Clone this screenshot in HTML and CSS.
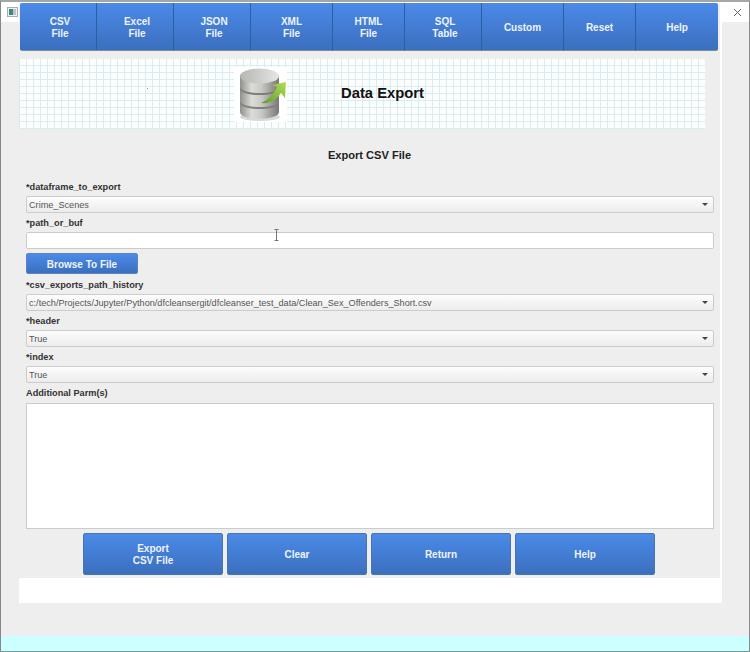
FILE: index.html
```html
<!DOCTYPE html>
<html>
<head>
  <meta charset="utf-8">
  <title>Data Export</title>
  <link rel="stylesheet" href="styles.css">
</head>
<body>

<div class="window">
  <div class="columns">
    <!-- left gutter with app icon -->
    <div class="gutter">
      <div class="titlebox">
        <svg class="app-icon" width="11" height="10" viewBox="0 0 11 10">
          <rect x="0.5" y="0.5" width="10" height="9" fill="#eef1f1" stroke="#a9afb0"/>
          <rect x="2" y="2" width="4" height="6" fill="#3f8a74"/>
          <rect x="6" y="2" width="3" height="6" fill="#b9c7d6"/>
        </svg>
      </div>
    </div>

    <div class="panel">
      <div class="panel-body">
        <!-- top toolbar -->
        <div class="toolbar">
          <button class="tool w77">CSV<br>File</button>
          <button class="tool w77">Excel<br>File</button>
          <button class="tool w77">JSON<br>File</button>
          <button class="tool w82">XML<br>File</button>
          <button class="tool w72">HTML<br>File</button>
          <button class="tool w77">SQL<br>Table</button>
          <button class="tool w82">Custom</button>
          <button class="tool w72">Reset</button>
          <button class="tool w82">Help</button>
        </div>

        <!-- banner -->
        <div class="banner">
          <i class="speck"></i>
          <div class="banner-icon">
            <svg width="53" height="55" viewBox="0 0 53 55">
              <defs>
                <linearGradient id="metal" x1="0" x2="1" y1="0" y2="0">
                  <stop offset="0" stop-color="#8f8f8c"/>
                  <stop offset="0.3" stop-color="#dcdcd9"/>
                  <stop offset="0.55" stop-color="#c9c9c6"/>
                  <stop offset="1" stop-color="#777774"/>
                </linearGradient>
                <linearGradient id="lid" x1="0" x2="1" y1="0" y2="0">
                  <stop offset="0" stop-color="#b5b5b2"/>
                  <stop offset="1" stop-color="#e6e6e4"/>
                </linearGradient>
                <linearGradient id="arrow" x1="0" x2="1" y1="1" y2="0">
                  <stop offset="0" stop-color="#5d9e1f"/>
                  <stop offset="1" stop-color="#b4dc5c"/>
                </linearGradient>
              </defs>
              <ellipse cx="26" cy="50" rx="20" ry="4" fill="#d8d8d8"/>
              <path d="M6 8 V45 C6 54 45 54 45 45 V8 Z" fill="url(#metal)"/>
              <path d="M6 20 C6 28 45 28 45 20 V22 C45 30 6 30 6 22 Z" fill="#7d7d7a"/>
              <path d="M6 34 C6 42 45 42 45 34 V36 C45 44 6 44 6 36 Z" fill="#808080"/>
              <ellipse cx="25.5" cy="9" rx="19.5" ry="7.5" fill="url(#lid)"/>
              <path d="M27 36 C34 33 40 27 43 20 L38 18 L52 15 L51 31 L47 26 C43 32 36 37 27 36 Z" fill="url(#arrow)"/>
            </svg>
          </div>
          <div class="banner-title">Data Export</div>
        </div>

        <div class="form-title">Export CSV File</div>

        <form class="form">
          <label class="lbl">*dataframe_to_export</label>
          <div class="select">Crime_Scenes</div>

          <label class="lbl">*path_or_buf</label>
          <div class="text-input">
            <svg class="ibeam" width="5" height="12" viewBox="0 0 5 12">
              <path d="M0.5 0.5 H4.5 M2.5 0.5 V11.5 M0.5 11.5 H4.5" fill="none" stroke="#777"/>
            </svg>
          </div>
          <button type="button" class="browse">Browse To File</button>

          <label class="lbl lbl-browse">*csv_exports_path_history</label>
          <div class="select">c:/tech/Projects/Jupyter/Python/dfcleansergit/dfcleanser_test_data/Clean_Sex_Offenders_Short.csv</div>

          <label class="lbl">*header</label>
          <div class="select">True</div>

          <label class="lbl">*index</label>
          <div class="select">True</div>

          <label class="lbl lbl-extra">Additional Parm(s)</label>
          <div class="textarea"></div>
        </form>

        <div class="actions">
          <button class="action">Export<br>CSV File</button>
          <button class="action">Clear</button>
          <button class="action">Return</button>
          <button class="action">Help</button>
        </div>
      </div>
    </div>

    <!-- right gutter with close button -->
    <div class="gutter">
      <div class="titlebox titlebox-right">
        <svg width="9" height="9" viewBox="0 0 9 9">
          <path d="M1 1 L8 8 M8 1 L1 8" stroke="#666" fill="none"/>
        </svg>
      </div>
    </div>
  </div>

  <div class="statusbar"></div>
</div>

</body>
</html>
```

FILE: styles.css
```css
/* page */
body {
  margin: 0;
  font-family: "Liberation Sans", Arial, sans-serif;
}

button {
  font-family: inherit;
  cursor: pointer;
}

.window {
  width: 750px;
  height: 652px;
  box-sizing: border-box;
  display: flex;
  flex-direction: column;
  background: #eeeeee;
  border-top: 2px solid #a6a6a6;
  border-left: 1px solid #888;
  border-right: 1px solid #888;
  border-bottom: 1px solid #7d9a9a;
}

.columns {
  flex: 1;
  display: grid;
  grid-template-columns: 18px 703px 27px;
}

.statusbar {
  height: 15px;
  background: #ccffff;
}

/* gutters */
.titlebox {
  height: 20px;
  background: #fff;
  display: flex;
  align-items: center;
  padding-left: 6px;
}

.titlebox-right {
  padding-left: 11px;
}

/* middle panel: grey body, white strip along the right and bottom */
.panel {
  height: 601px;
  background: #fff;
  padding: 1px 2px 0 0;
  box-sizing: border-box;
}

.panel-body {
  background: #eee;
}

.toolbar {
  display: flex;
  margin-left: 1px;
  width: 698px;
  height: 48px;
}

.tool {
  height: 48px;
  padding: 2px 0 0;
  color: #eef3fb;
  font-size: 10px;
  line-height: 12px;
  font-weight: bold;
  background: linear-gradient(#4b8ae8, #3b6fbe);
  border: 0;
  border-right: 1px solid #2d5da3;
  border-bottom: 1px solid #7a8ba3;
}

.w72 { width: 72px; }
.w77 { width: 77px; padding-left: 4px; }
.w82 { width: 82px; }

.tool:first-child {
  border-radius: 2px 0 0 2px;
}

.tool:last-child {
  border-right: 0;
  border-radius: 0 2px 2px 0;
}

/* banner with the graph paper background */
.banner {
  display: flex;
  align-items: center;
  position: relative;
  width: 686px;
  height: 70px;
  margin-top: 8px;
  background-color: #fcfefe;
  background-image:
    repeating-linear-gradient(90deg, #d9edf0 0 1px, transparent 1px 7px),
    repeating-linear-gradient(0deg, #d9edf0 0 1px, transparent 1px 7px);
}

.speck {
  position: absolute;
  left: 128px;
  top: 29px;
  width: 1px;
  height: 1px;
  background: #8a9a9a;
}

.banner-icon {
  margin: 0 0 0 215px;
  width: 53px;
  height: 55px;
  background: #fff;
}

.banner-title {
  margin: 0 0 3px 54px;
  font-size: 14.8px;
  font-weight: bold;
  color: #111;
}

.form-title {
  height: 48px;
  padding-top: 20px;
  box-sizing: border-box;
  text-align: center;
  font-size: 11.1px;
  line-height: 13px;
  font-weight: bold;
  color: #222;
}

.form {
  padding: 0 6px 0 7px;
  display: flex;
  flex-direction: column;
}

.lbl {
  display: block;
  height: 19px;
  line-height: 14px;
  padding-top: 3px;
  box-sizing: border-box;
  font-size: 9.2px;
  font-weight: bold;
  color: #333;
}

.lbl-browse {
  margin-top: 1px;
}

.lbl-extra {
  height: 20px;
}

.select {
  height: 17px;
  box-sizing: border-box;
  line-height: 16px;
  padding-left: 2px;
  font-size: 9.14px;
  color: #555;
  border: 1px solid #ccc;
  border-radius: 2px;
  background: linear-gradient(#fdfdfd, #ececec);
  position: relative;
}

/* dropdown arrow */
.select::after {
  content: "";
  position: absolute;
  right: 5px;
  top: 6px;
  border-left: 3px solid transparent;
  border-right: 3px solid transparent;
  border-top: 3px solid #444;
}

.text-input {
  height: 17px;
  box-sizing: border-box;
  background: #fff;
  border: 1px solid #ccc;
  border-radius: 2px;
  position: relative;
}

.ibeam {
  position: absolute;
  left: 247px;
  top: -4px;
}

.browse {
  width: 112px;
  height: 21px;
  margin-top: 4px;
  padding: 1px 0 0;
  color: #eef3fb;
  font-size: 10px;
  font-weight: bold;
  background: linear-gradient(#4b8ae8, #3b6fbe);
  border: 1px solid #5a85c2;
  border-radius: 2px;
}

.textarea {
  height: 126px;
  box-sizing: border-box;
  background: #fff;
  border: 1px solid #ccc;
}

.actions {
  height: 49px;
  padding: 4px 0 0 64px;
  box-sizing: border-box;
  display: flex;
  gap: 4px;
}

.action {
  width: 140px;
  height: 42px;
  padding: 2px 0 0;
  color: #eef3fb;
  font-size: 10px;
  line-height: 12px;
  font-weight: bold;
  background: linear-gradient(#4b8ae8, #3b6fbe);
  border: 1px solid #4a74b0;
  border-radius: 2px;
}
```
